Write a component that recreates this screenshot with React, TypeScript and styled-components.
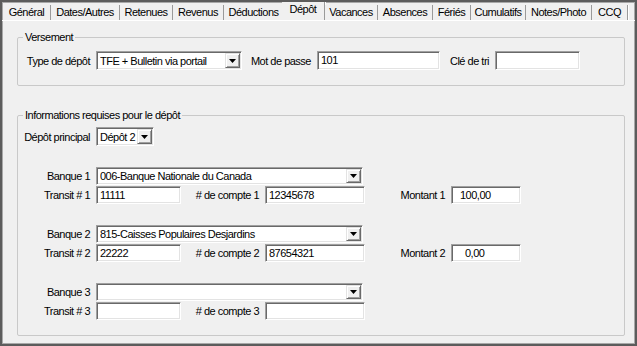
import React from 'react';
import styled, { createGlobalStyle, css } from 'styled-components';

const GlobalStyle = createGlobalStyle`
  body {
    margin: 0;
    background: #f0f0f0;
    font-family: "Liberation Sans", Arial, sans-serif;
    font-size: 11px;
    letter-spacing: -0.5px;
    color: #000;
  }
`;

const sunken = css`
  box-sizing: border-box;
  background: #fff;
  border: 1px solid;
  border-color: #a0a0a0 #fff #fff #a0a0a0;
  box-shadow: inset 1px 1px 0 #696969, inset -1px -1px 0 #e3e3e3;
`;

const Frame = styled.div({
  width: '637px',
  height: '346px',
  boxSizing: 'border-box',
  border: '2px solid #5c5c5c',
  boxShadow: 'inset 0 0 0 1px #a8a8a8',
  backgroundColor: '#f0f0f0',
  overflow: 'hidden',
  display: 'flex',
  flexDirection: 'column',
})

const TabBar = styled.div({
  display: 'flex',
  height: '18px',
  paddingLeft: '1px',
  alignItems: 'flex-end',
})

const Tab = styled.div<{ $active?: boolean; $w: number }>`
  box-sizing: border-box;
  width: ${p => p.$w}px;
  height: ${p => (p.$active ? '18px' : '15px')};
  line-height: 15px;
  text-align: center;
  margin-left: ${p => (p.$active ? '-2px' : '0')};
  background: #f0f0f0;
  border-right: 1px solid #9a9a9a;
  box-shadow: 1px 0 0 #fff;
  white-space: nowrap;
`;

const Panel = styled.div({
  flex: 1,
  borderTop: '1px solid #fff',
  display: 'flex',
  flexDirection: 'column',
  gap: '23px',
  padding: '10px 10px 0 15px',
})

const Group = styled.fieldset<{ $top: number }>`
  margin: 0;
  min-width: 0;
  border: 1px solid #c9c9c9;
  border-radius: 2px;
  padding: ${p => p.$top}px 0 15px 0;
  display: flex;
  flex-direction: column;
`;

const Legend = styled.legend({
  marginLeft: '5px',
  padding: '0 2px',
  lineHeight: '12px',
})

const Row = styled.div({
  display: 'flex',
  alignItems: 'center',
})

const BankBlock = styled.div({
  display: 'flex',
  flexDirection: 'column',
  gap: '1px',
  marginTop: '21px',
})

const Label = styled.span<{ $w: number }>`
  box-sizing: border-box;
  width: ${p => p.$w}px;
  padding-right: 6px;
  text-align: right;
  white-space: nowrap;
`;

const Field = styled.div<{ $w: number; $h?: number; $indent?: number }>`
  ${sunken}
  width: ${p => p.$w}px;
  height: ${p => p.$h ?? 19}px;
  line-height: ${p => (p.$h ?? 19) - 2}px;
  padding-left: ${p => p.$indent ?? 3}px;
  white-space: nowrap;
  overflow: hidden;
`;

const Combo = styled.div<{ $w: number; $h?: number }>`
  ${sunken}
  width: ${p => p.$w}px;
  height: ${p => p.$h ?? 19}px;
  display: flex;
  padding: 1px 1px 1px 3px;
`;

const ComboText = styled.span({
  flex: 1,
  alignSelf: 'center',
  whiteSpace: 'nowrap',
  overflow: 'hidden',
})

const DropButton = styled.span({
  width: '15px',
  boxSizing: 'border-box',
  backgroundColor: '#f0f0f0',
  border: '1px solid',
  borderColor: '#e3e3e3 #696969 #696969 #e3e3e3',
  boxShadow: 'inset 1px 1px 0 #fff, inset -1px -1px 0 #a0a0a0',
  display: 'flex',
  alignItems: 'center',
  justifyContent: 'center',
})

const Select = ({ w, h, value }: { w: number; h?: number; value: string }) => (
  <Combo $w={w} $h={h}>
    <ComboText>{value}</ComboText>
    <DropButton>
      <svg width="7" height="4" viewBox="0 0 7 4">
        <polygon points="0,0 7,0 3.5,4" fill="#000" />
      </svg>
    </DropButton>
  </Combo>
);

const tabs: [string, number][] = [
  ['Général', 48],
  ['Dates/Autres', 69],
  ['Retenues', 53],
  ['Revenus', 51],
  ['Déductions', 60],
  ['Dépôt', 43],
  ['Vacances', 53],
  ['Absences', 55],
  ['Fériés', 38],
  ['Cumulatifs', 55],
  ['Notes/Photo', 66],
  ['CCQ', 36],
];

const banks = [
  { n: 1, bank: '006-Banque Nationale du Canada', transit: '11111', account: '12345678', amount: '100,00', indent: 8 },
  { n: 2, bank: '815-Caisses Populaires Desjardins', transit: '22222', account: '87654321', amount: '0,00', indent: 13 },
  { n: 3, bank: '', transit: '', account: '', amount: null, indent: 0 },
];

const App: React.FC = () => {
  return (
    <Frame>
      <GlobalStyle />
      <TabBar>
        {tabs.map(([t, w]) => (
          <Tab key={t} $w={w} $active={t === 'Dépôt'}>{t}</Tab>
        ))}
      </TabBar>
      <Panel>
        <Group $top={8}>
          <Legend>Versement</Legend>
          <Row>
            <Label $w={78}>Type de dépôt</Label>
            <Select w={146} value="TFE + Bulletin via portail" />
            <Label $w={75}>Mot de passe</Label>
            <Field $w={123}>101</Field>
            <Label $w={55}>Clé de tri</Label>
            <Field $w={85} />
          </Row>
        </Group>
        <Group $top={6}>
          <Legend>Informations requises pour le dépôt</Legend>
          <Row>
            <Label $w={78}>Dépôt principal</Label>
            <Select w={58} value="Dépôt 2" />
          </Row>
          {banks.map(b => (
            <BankBlock key={b.n}>
              <Row>
                <Label $w={78}>Banque {b.n}</Label>
                <Select w={267} h={18} value={b.bank} />
              </Row>
              <Row>
                <Label $w={78}>Transit # {b.n}</Label>
                <Field $w={85} $h={18}>{b.transit}</Field>
                <Label $w={84}># de compte {b.n}</Label>
                <Field $w={100} $h={18}>{b.account}</Field>
                {b.amount !== null && (
                  <>
                    <Label $w={86}>Montant {b.n}</Label>
                    <Field $w={70} $h={18} $indent={b.indent}>{b.amount}</Field>
                  </>
                )}
              </Row>
            </BankBlock>
          ))}
        </Group>
      </Panel>
    </Frame>
  );
};

export default App;
